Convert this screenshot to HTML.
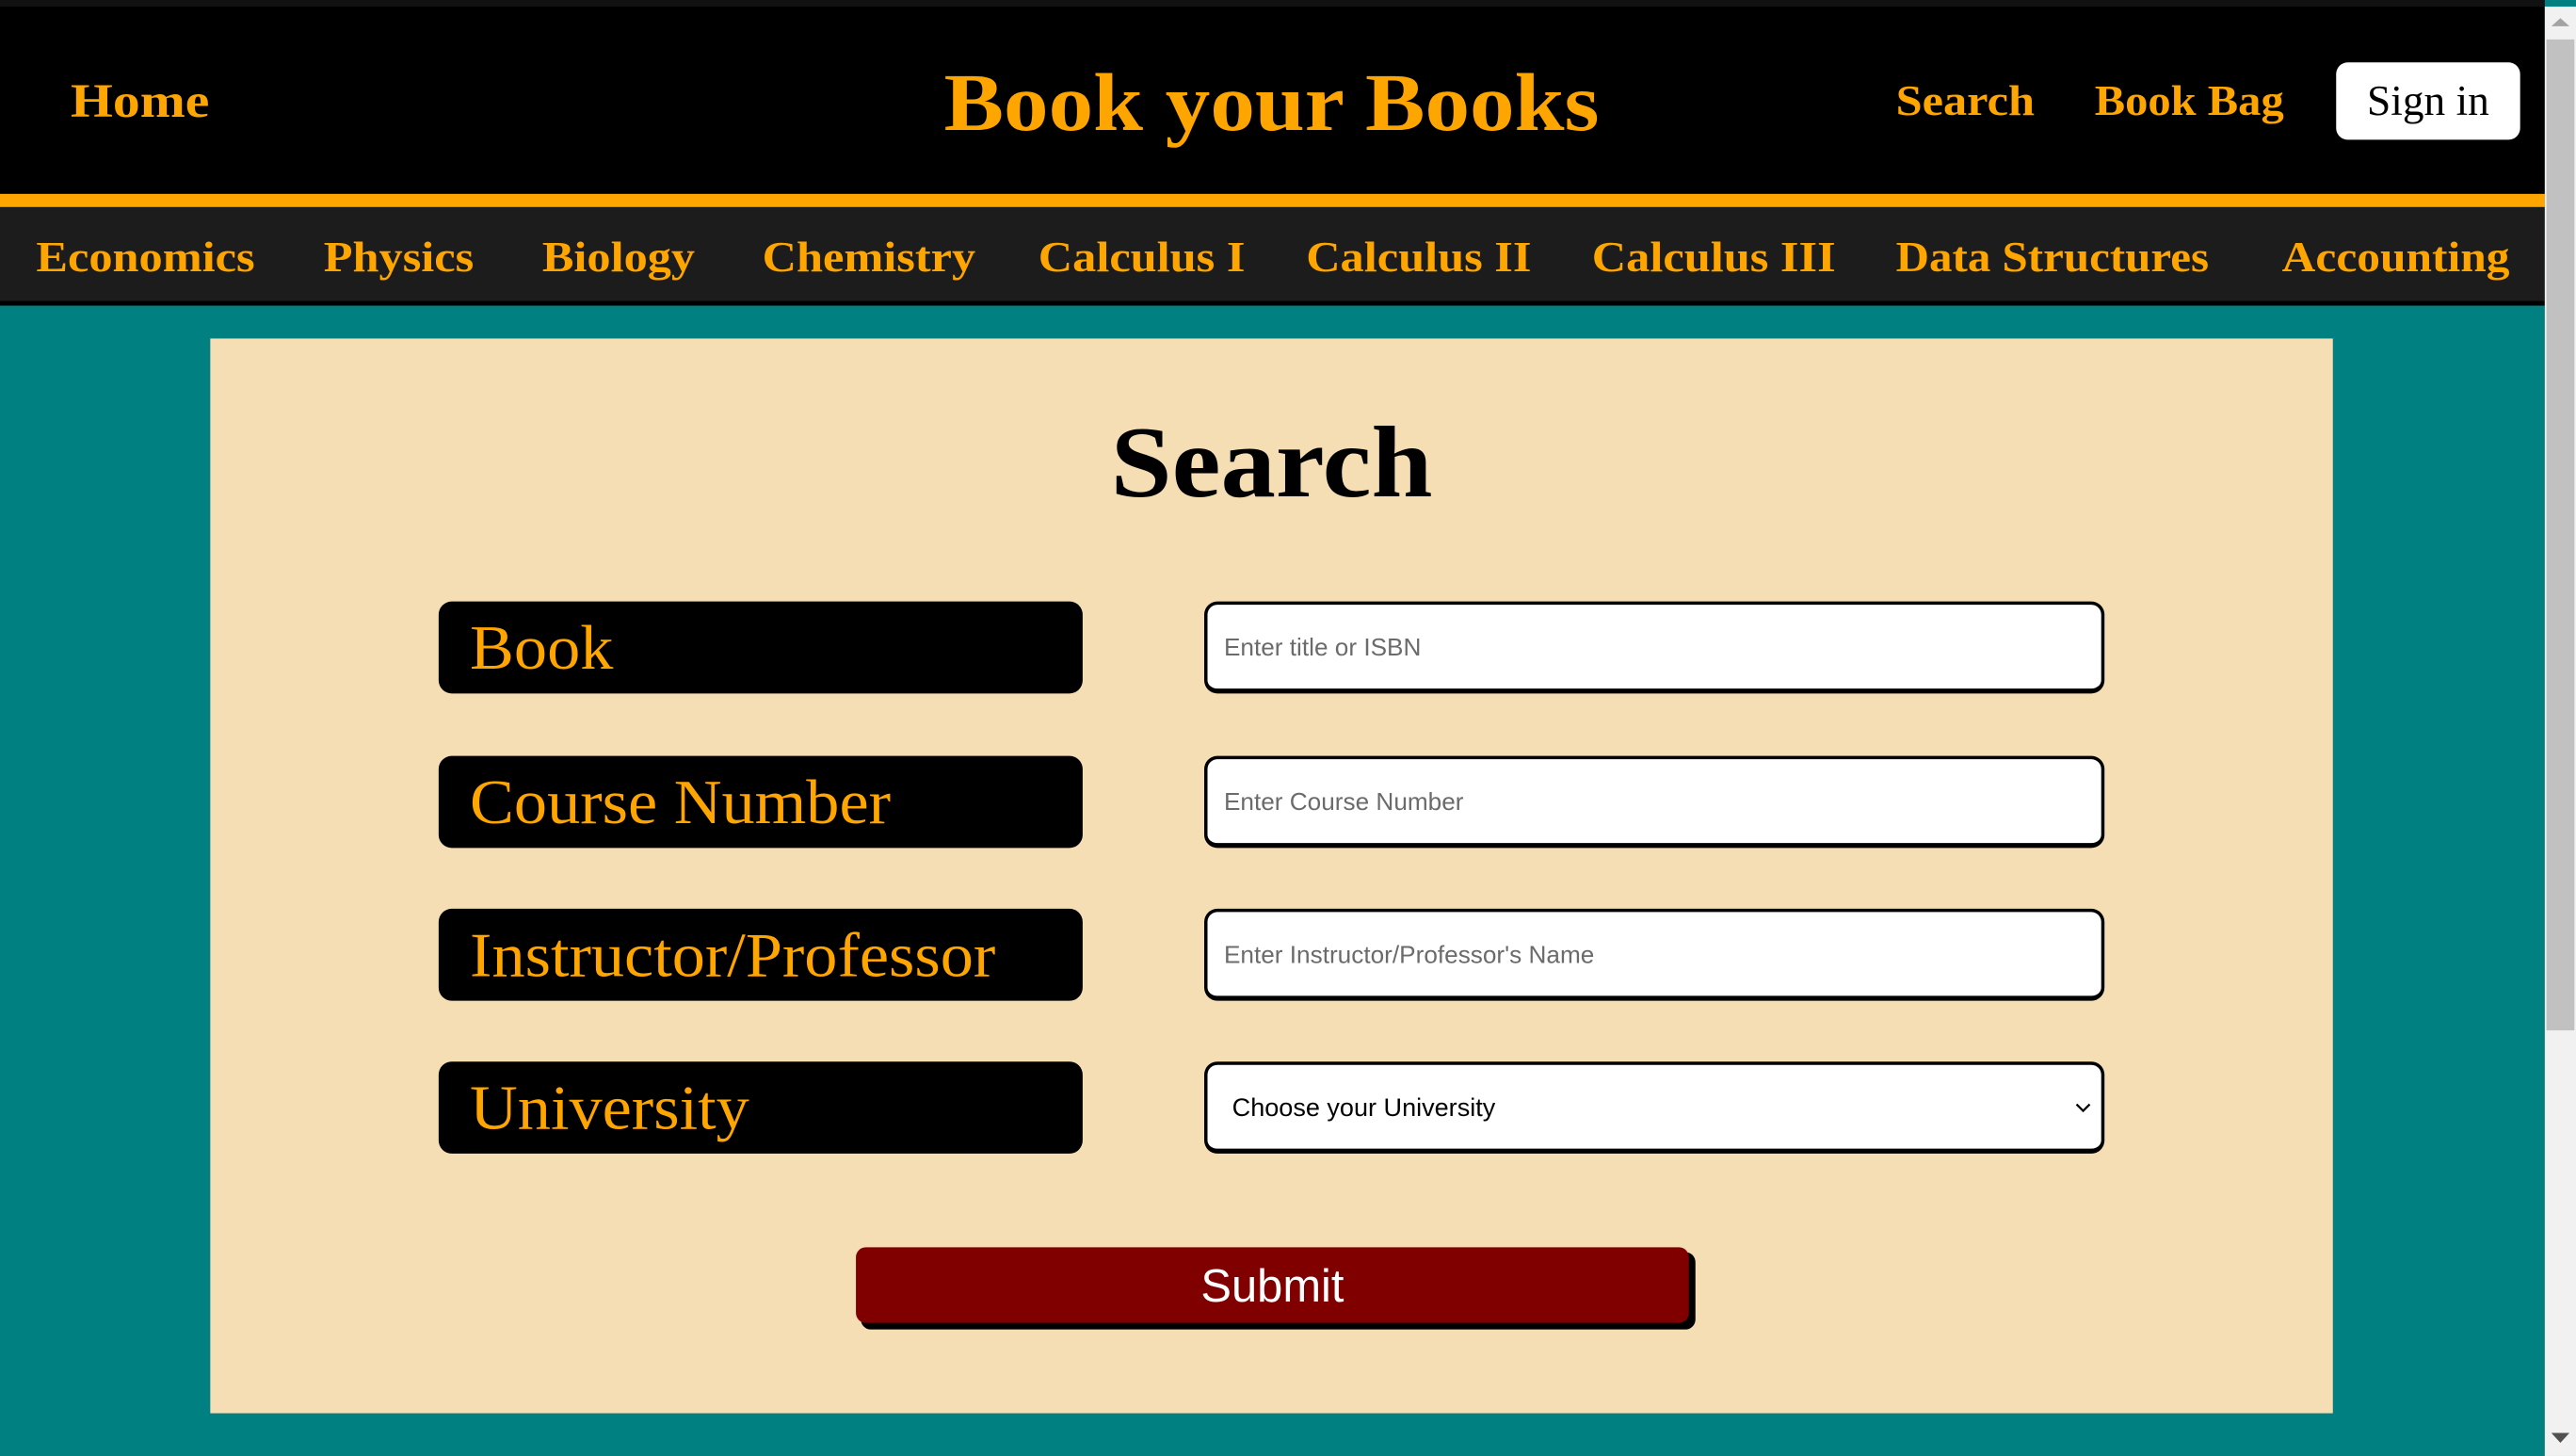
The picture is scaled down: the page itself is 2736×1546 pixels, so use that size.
<!DOCTYPE html>
<html><head><meta charset="utf-8"><style>
html,body{margin:0;padding:0;width:2736px;height:1546px;overflow:hidden;background:#008080}
#w{position:absolute;left:0;top:0;width:1568px;height:886px;transform:scale(1.7449,1.7449);transform-origin:0 0;font-family:"Liberation Serif",serif}
.a{position:absolute;white-space:nowrap}
.o{color:#ffa500;font-weight:bold}
.s{transform-origin:0 50%}
.n{transform:scaleX(1.11);transform-origin:0 50%}
.lab{position:absolute;left:267px;width:392px;height:56px;background:#000;border-radius:8px;color:#ffa500;font-size:38px;line-height:58px;padding-left:19px;box-sizing:border-box}
.lab span{display:inline-block;transform:scaleX(1.06);transform-origin:0 50%}
.inp{position:absolute;left:733px;width:548px;height:56px;background:#fff;border:2px solid #000;border-bottom-width:3px;border-radius:8px;box-sizing:border-box;font-family:"Liberation Sans",sans-serif;font-size:15px;color:#6b6b6b;line-height:53px;padding-left:10px}
</style></head><body><div id="w">
<div class="a" style="left:0;top:0;width:1549px;height:4px;background:#111"></div>
<div class="a" style="left:0;top:4px;width:1549px;height:114px;background:#000"></div>
<div class="a" style="left:0;top:118px;width:1549px;height:8px;background:#ffa500"></div>
<div class="a" style="left:0;top:126px;width:1549px;height:57px;background:#1c1c1c"></div>
<div class="a" style="left:0;top:183px;width:1549px;height:3px;background:#000"></div>
<div class="a o" style="left:43px;top:46px;font-size:29px;transform:scaleX(1.14);transform-origin:0 50%">Home</div>
<div class="a o" style="left:574px;top:33px;font-size:50px;width:400px;text-align:center;transform:scaleX(1.09)">Book your Books</div>
<div class="a o" style="left:1154px;top:47px;font-size:26px;transform:scaleX(1.11);transform-origin:0 50%">Search</div>
<div class="a o" style="left:1275px;top:47px;font-size:26px;transform:scaleX(1.07);transform-origin:0 50%">Book Bag</div>
<div class="a" style="left:1422px;top:38px;width:112px;height:47px;background:#fff;border-radius:7px;text-align:center;font-size:26px;line-height:47px;color:#000">Sign in</div>
<div class="a o n" style="left:22px;top:142px;font-size:26px">Economics</div>
<div class="a o n" style="left:197px;top:142px;font-size:26px">Physics</div>
<div class="a o n" style="left:330px;top:142px;font-size:26px">Biology</div>
<div class="a o n" style="left:464px;top:142px;font-size:26px">Chemistry</div>
<div class="a o n" style="left:632px;top:142px;font-size:26px">Calculus I</div>
<div class="a o n" style="left:795px;top:142px;font-size:26px">Calculus II</div>
<div class="a o n" style="left:969px;top:142px;font-size:26px">Calculus III</div>
<div class="a o n" style="left:1154px;top:142px;font-size:26px;transform:scaleX(1.08)">Data Structures</div>
<div class="a o n" style="left:1389px;top:142px;font-size:26px;transform:scaleX(1.09)">Accounting</div>
<div class="a" style="left:128px;top:206px;width:1292px;height:654px;background:#f5deb3"></div>
<div class="a" style="left:128px;top:247px;width:1292px;text-align:center;font-size:62px;font-weight:bold;color:#000;transform:scaleX(1.08)">Search</div>
<div class="lab" style="top:366px"><span>Book</span></div>
<div class="lab" style="top:460px"><span>Course Number</span></div>
<div class="lab" style="top:553px"><span>Instructor/Professor</span></div>
<div class="lab" style="top:646px"><span>University</span></div>
<div class="inp" style="top:366px">Enter title or ISBN</div>
<div class="inp" style="top:460px">Enter Course Number</div>
<div class="inp" style="top:553px">Enter Instructor/Professor's Name</div>
<div class="inp" style="top:646px;color:#000;padding-left:15px;font-size:15.5px">Choose your University<svg style="position:absolute;right:6px;top:22px" width="10" height="8" viewBox="0 0 10 8"><path d="M1 2 L5 6 L9 2" fill="none" stroke="#000" stroke-width="1.3"/></svg></div>
<div class="a" style="left:524px;top:762px;width:508px;height:47px;background:#000;border-radius:6px"></div>
<div class="a" style="left:521px;top:759px;width:507px;height:46px;background:#800000;border-radius:6px;color:#fff;font-family:'Liberation Sans',sans-serif;font-size:28px;line-height:47px;text-align:center">Submit</div>
<div class="a" style="left:1549px;top:4px;width:19px;height:882px;background:#f1f1f1"></div>
<div class="a" style="left:1550px;top:24px;width:17px;height:603px;background:#c1c1c1"></div>
<svg class="a" style="left:1553px;top:10px" width="11" height="8"><path d="M0 6 L5.5 1 L11 6Z" fill="#a3a3a3"/></svg>
<svg class="a" style="left:1553px;top:871px" width="11" height="8"><path d="M0 1 L5.5 7 L11 1Z" fill="#505050"/></svg>
</div></body></html>
